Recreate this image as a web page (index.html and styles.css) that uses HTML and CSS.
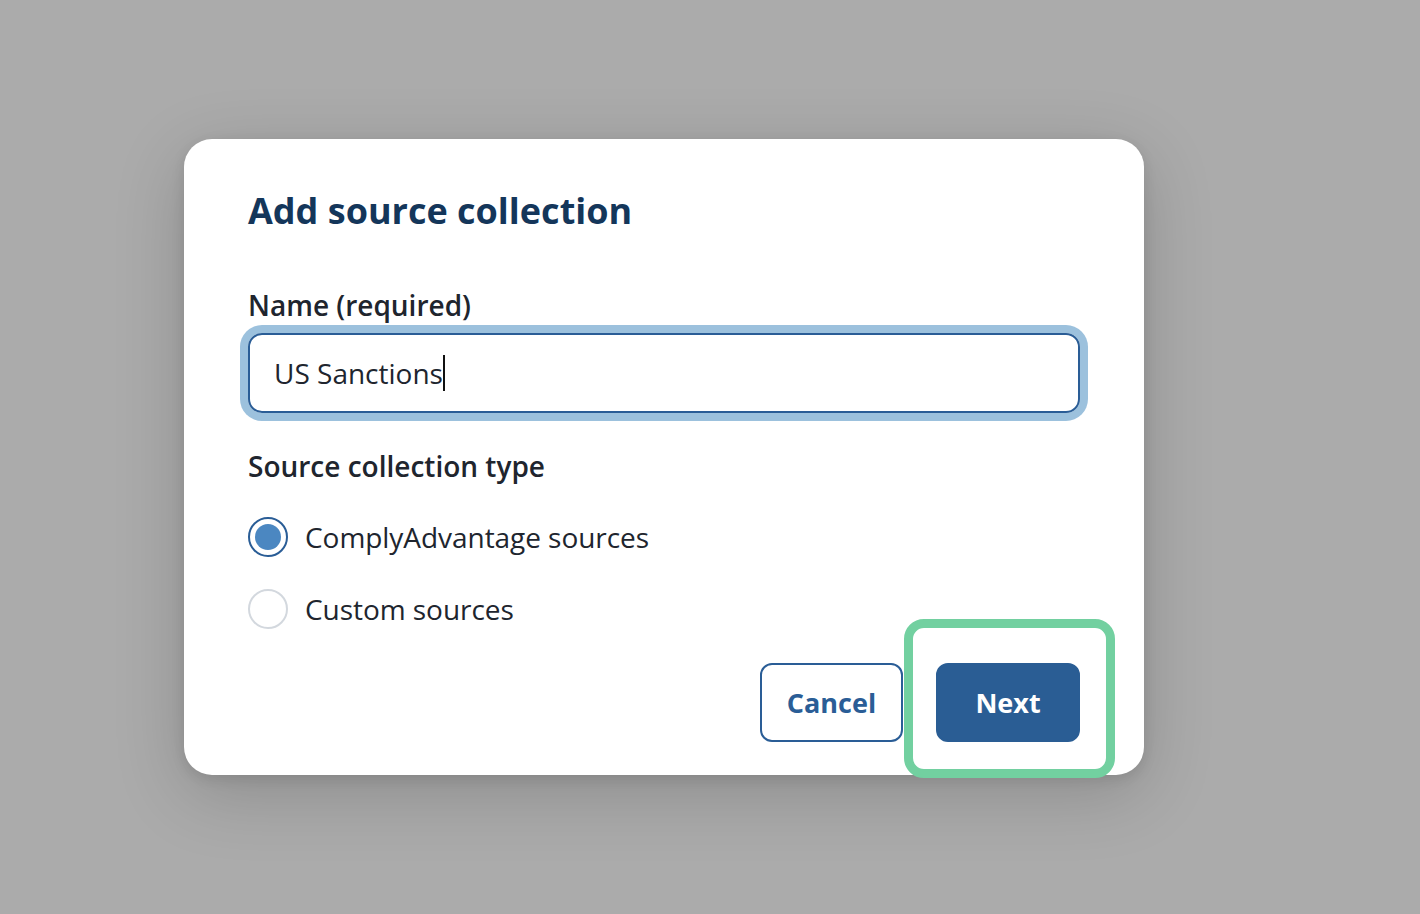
FILE: index.html
```html
<!DOCTYPE html>
<html lang="en">
<head>
<meta charset="utf-8">
<title>Add source collection</title>
<link rel="stylesheet" href="styles.css">
</head>
<body>
<div class="backdrop">
  <div class="dialog" role="dialog" aria-labelledby="dlg-title">
    <h1 class="dialog-title" id="dlg-title">Add source collection</h1>

    <label class="field-label" for="collection-name">Name (required)</label>
    <div class="input-wrap">
      <div class="text-input" id="collection-name"><span class="value">US Sanctions</span><span class="caret"></span></div>
    </div>

    <div class="group-label">Source collection type</div>
    <div class="radio-list">
      <div class="radio-row">
        <span class="radio radio-checked"><span class="radio-dot"></span></span>
        <span class="radio-text">ComplyAdvantage sources</span>
      </div>
      <div class="radio-row">
        <span class="radio"></span>
        <span class="radio-text">Custom sources</span>
      </div>
    </div>

    <div class="actions">
      <button class="btn btn-secondary" type="button">Cancel</button>
      <div class="highlight-anchor">
        <button class="btn btn-primary" type="button">Next</button>
        <span class="highlight-ring"></span>
      </div>
    </div>
  </div>
</div>
</body>
</html>
```

FILE: styles.css
```css
* {
  box-sizing: border-box;
}

html, body {
  margin: 0;
  padding: 0;
}

body {
  width: 1420px;
  height: 914px;
  overflow: hidden;
  background: #ababab;
  font-family: "Open Sans", "Noto Sans", "Liberation Sans", sans-serif;
  color: #20252e;
}

.backdrop {
  padding: 139px 0 0 184px;
}

.dialog {
  width: 960px;
  height: 636px;
  background: #ffffff;
  border-radius: 28px;
  padding: 50px 64px 33px 64px;
  box-shadow: 0 18px 70px rgba(0, 0, 0, 0.18), 0 4px 14px rgba(0, 0, 0, 0.10);
  display: flex;
  flex-direction: column;
}

.dialog-title {
  margin: 0;
  font-size: 36px;
  line-height: 44px;
  font-weight: 700;
  color: #14365a;
}

.field-label {
  display: block;
  margin-top: 56px;
  font-size: 28px;
  line-height: 32px;
  font-weight: 600;
  color: #20252e;
}

.input-wrap {
  margin-top: 12px;
}

.text-input {
  height: 80px;
  border: 2px solid #2a5d96;
  border-radius: 14px;
  box-shadow: 0 0 0 8px #9cc1dd;
  padding: 0 24px;
  display: flex;
  align-items: center;
  font-size: 28px;
  color: #20252e;
}

.caret {
  display: inline-block;
  width: 2px;
  height: 36px;
  background: #111;
  margin-left: 0;
}

.group-label {
  margin-top: 37px;
  font-size: 28px;
  line-height: 32px;
  font-weight: 600;
  color: #20252e;
}

.radio-list {
  margin-top: 35px;
  display: flex;
  flex-direction: column;
  gap: 32px;
}

.radio-row {
  display: flex;
  align-items: center;
  height: 40px;
  gap: 17px;
}

.radio {
  width: 40px;
  height: 40px;
  border-radius: 50%;
  border: 2px solid #d3d8de;
  background: #fff;
  display: flex;
  align-items: center;
  justify-content: center;
  flex: none;
}

.radio-checked {
  border-color: #2a5d96;
}

.radio-dot {
  width: 26px;
  height: 26px;
  border-radius: 50%;
  background: #4b87c1;
}

.radio-text {
  font-size: 28px;
  color: #20252e;
  letter-spacing: -0.05px;
}

.actions {
  margin-top: auto;
  display: flex;
  justify-content: flex-end;
  gap: 33px;
}

.btn {
  height: 79px;
  border-radius: 12px;
  font-family: inherit;
  font-size: 27px;
  font-weight: 700;
  padding: 0;
  cursor: pointer;
}

.btn-secondary {
  width: 143px;
  background: #fff;
  border: 2px solid #2a5d96;
  color: #2a5d96;
}

.btn-primary {
  width: 144px;
  background: #2a5d94;
  border: 2px solid #2a5d94;
  color: #fff;
}

.highlight-anchor {
  position: relative;
}

.highlight-ring {
  position: absolute;
  left: -32px;
  right: -35px;
  top: -44px;
  bottom: -36px;
  border: 9px solid #72d0a0;
  border-radius: 20px;
  pointer-events: none;
}
```
